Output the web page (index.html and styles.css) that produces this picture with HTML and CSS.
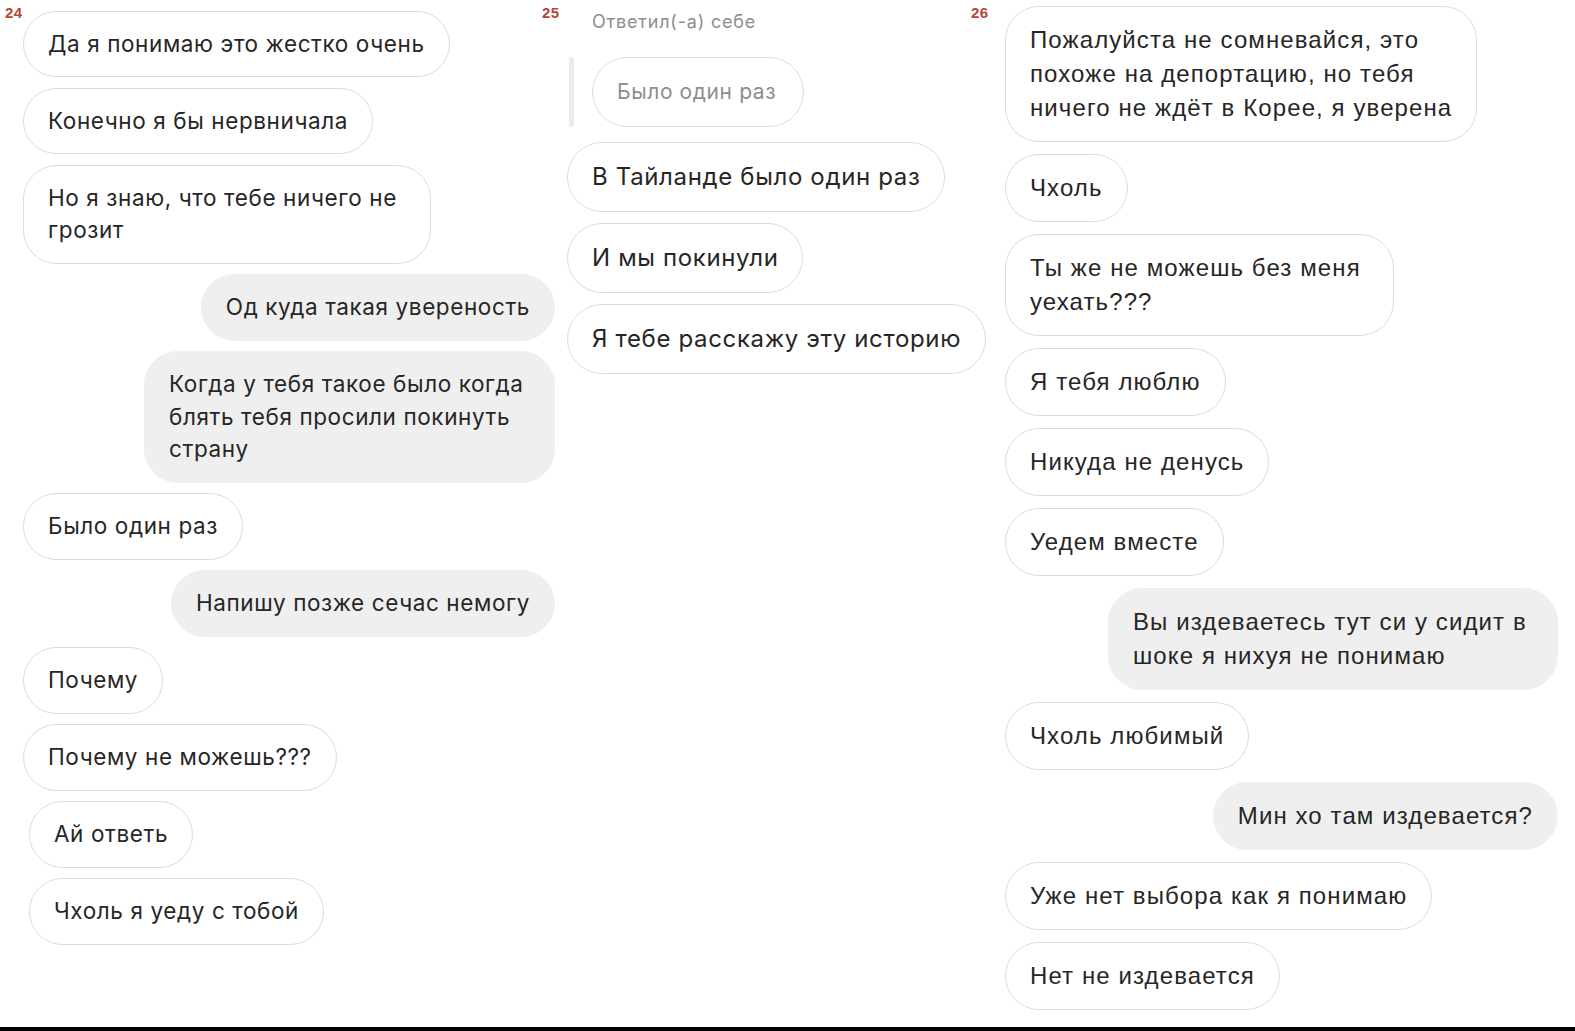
FILE: index.html
```html
<!DOCTYPE html>
<html lang="ru">
<head>
<meta charset="utf-8">
<title>Чат</title>
<link rel="stylesheet" href="styles.css">
</head>
<body>
<div class="page">
  <section class="col col-a">
    <span class="num">24</span>
    <div class="thread">
      <div class="msg in">Да я понимаю это жестко очень</div>
      <div class="msg in">Конечно я бы нервничала</div>
      <div class="msg in w-a3">Но я знаю, что тебе ничего не<br>грозит</div>
      <div class="msg out">Од куда такая увереность</div>
      <div class="msg out w-a5">Когда у тебя такое было когда<br>блять тебя просили покинуть<br>страну</div>
      <div class="msg in">Было один раз</div>
      <div class="msg out">Напишу позже сечас немогу</div>
      <div class="msg in">Почему</div>
      <div class="msg in">Почему не можешь???</div>
      <div class="msg in shift">Ай ответь</div>
      <div class="msg in shift">Чхоль я уеду с тобой</div>
    </div>
  </section>
  <section class="col col-b">
    <span class="num">25</span>
    <div class="reply-label">Ответил(-а) себе</div>
    <div class="quote">
      <span class="quote-bar"></span>
      <div class="msg in quoted">Было один раз</div>
    </div>
    <div class="thread">
      <div class="msg in">В Тайланде было один раз</div>
      <div class="msg in">И мы покинули</div>
      <div class="msg in">Я тебе расскажу эту историю</div>
    </div>
  </section>
  <section class="col col-c">
    <span class="num">26</span>
    <div class="thread">
      <div class="msg in w-c1">Пожалуйста не сомневайся, это<br>похоже на депортацию, но тебя<br>ничего не ждёт в Корее, я уверена</div>
      <div class="msg in">Чхоль</div>
      <div class="msg in w-c3">Ты же не можешь без меня<br>уехать???</div>
      <div class="msg in">Я тебя люблю</div>
      <div class="msg in">Никуда не денусь</div>
      <div class="msg in">Уедем вместе</div>
      <div class="msg out w-c7">Вы издеваетесь тут си у сидит в<br>шоке я нихуя не понимаю</div>
      <div class="msg in">Чхоль любимый</div>
      <div class="msg out">Мин хо там издевается?</div>
      <div class="msg in">Уже нет выбора как я понимаю</div>
      <div class="msg in">Нет не издевается</div>
    </div>
  </section>
</div>
<div class="bottom-bar"></div>
</body>
</html>
```

FILE: styles.css
```css
* { box-sizing: border-box; }
html, body {
  margin: 0;
  padding: 0;
  background: #fff;
}
body {
  width: 1575px;
  height: 1031px;
  overflow: hidden;
  font-family: Inter, "Liberation Sans", Arial, sans-serif;
  color: #262626;
  display: flex;
  flex-direction: column;
}
.page {
  flex: 1;
  display: flex;
  align-items: flex-start;
  overflow: hidden;
}
.col {
  position: relative;
  display: flex;
  flex-direction: column;
  flex: none;
}
.num {
  position: absolute;
  top: 5px;
  font-family: "Liberation Sans", Arial, sans-serif;
  font-weight: 700;
  font-size: 15px;
  line-height: 15px;
  letter-spacing: 0.3px;
  color: #b5463a;
}
.thread {
  display: flex;
  flex-direction: column;
  align-items: flex-start;
}
.msg {
  border: 1px solid #dbdbdb;
  background: #fff;
  white-space: nowrap;
}
.msg.out {
  align-self: flex-end;
  background: #efefef;
  border-color: #efefef;
}

/* Column 24 */
.col-a {
  width: 562px;
  padding: 11px 7px 0 23px;
}
.col-a .num { left: 5px; }
.col-a .thread { gap: 10.6px; }
.col-a .msg {
  font-size: 22.5px;
  letter-spacing: 0.6px;
  line-height: 32.4px;
  padding: 16px 24px;
  border-radius: 34px;
}
.col-a .msg.shift { margin-left: 6px; }
.w-a3 { width: 408px; }
.w-a5 { width: 411px; }

/* Column 25 */
.col-b {
  width: 438px;
  padding: 8px 0 0 5px;
}
.col-b .num { left: -20px; }
.reply-label {
  margin-left: 25px;
  font-size: 18px;
  letter-spacing: 0.8px;
  line-height: 28px;
  color: #8e8e8e;
  height: 49px;
}
.quote {
  display: flex;
  gap: 18px;
  margin-bottom: 15px;
}
.quote-bar {
  width: 5px;
  margin-left: 2px;
  border-radius: 3px;
  background: #ececec;
}
.col-b .thread { gap: 11px; }
.col-b .msg {
  font-size: 24px;
  letter-spacing: 0.65px;
  line-height: 34px;
  padding: 17px 24px;
  border-radius: 36px;
}
.col-b .msg.quoted {
  color: #8e8e8e;
  font-size: 21px;
  letter-spacing: 0.6px;
  padding-right: 27px;
}

/* Column 26 */
.col-c {
  width: 575px;
  padding: 6px 17px 0 5px;
}
.col-c .num { left: -29px; }
.col-c .thread { gap: 12px; }
.col-c .msg {
  font-family: "Liberation Sans", Arial, sans-serif;
  font-size: 24px;
  letter-spacing: 1.1px;
  line-height: 34px;
  padding: 16px 24px;
  border-radius: 34px;
}
.w-c1 { width: 472px; }
.w-c3 { width: 389px; }
.w-c7 { width: 450px; }

.bottom-bar {
  height: 4px;
  background: #000;
}
```
